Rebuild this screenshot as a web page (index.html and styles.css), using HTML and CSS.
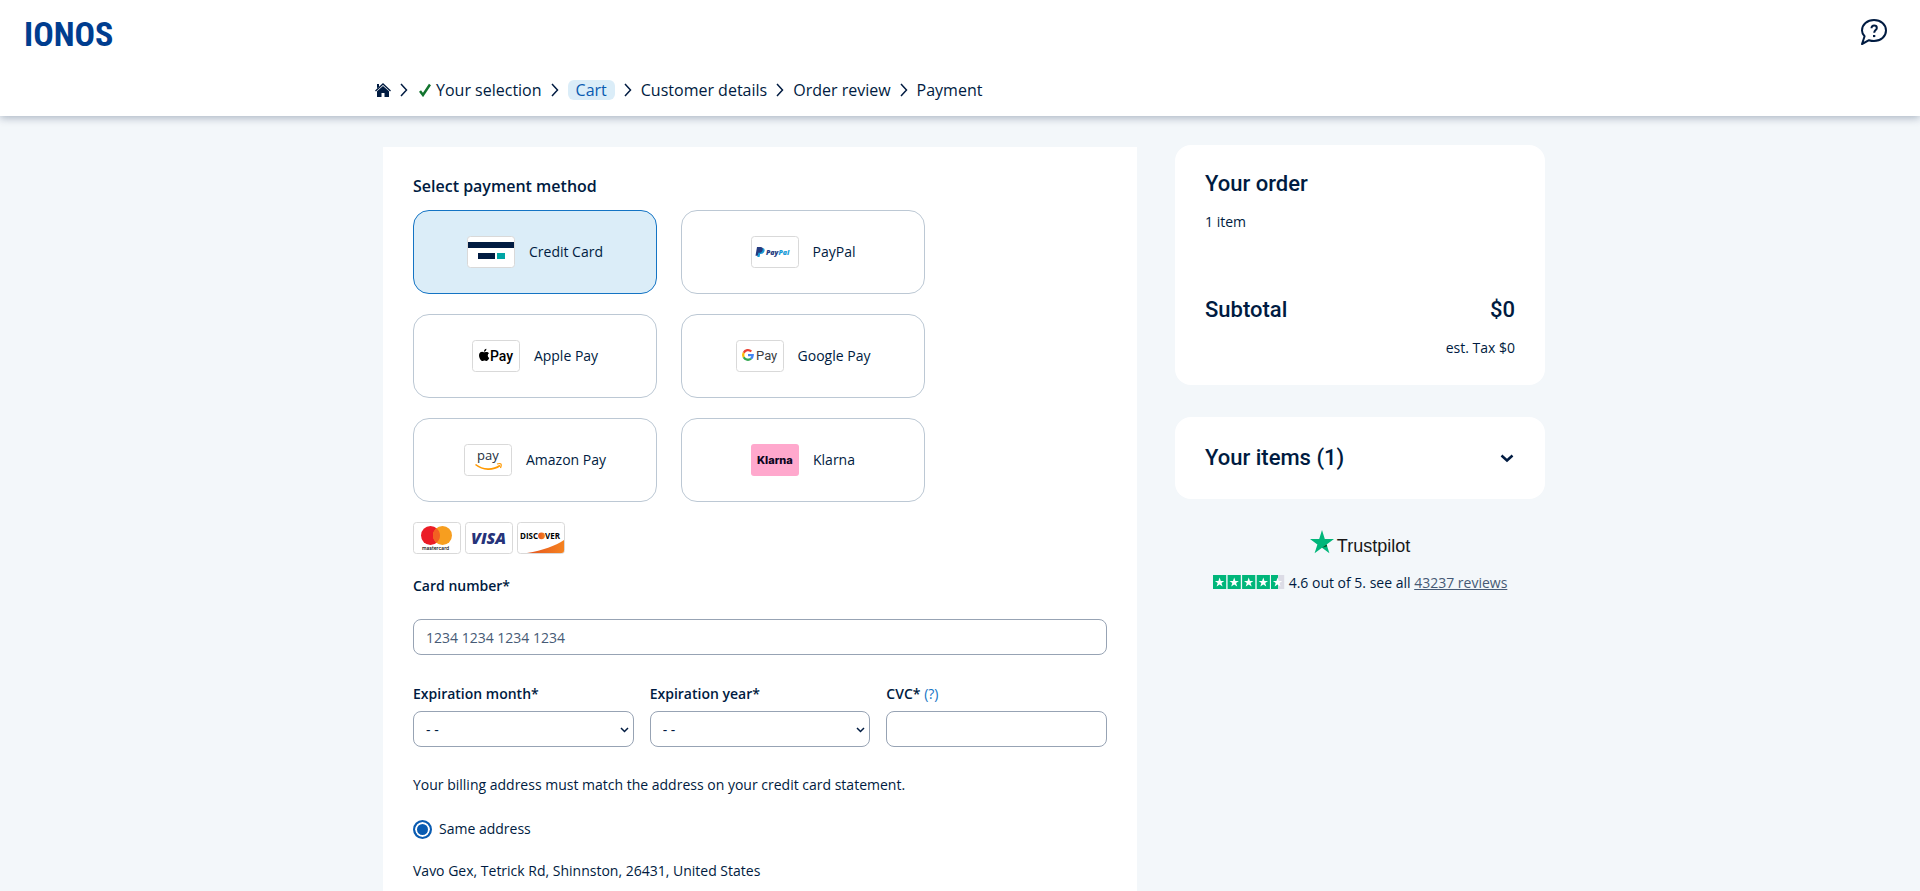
FILE: index.html
```html
<!DOCTYPE html>
<html lang="en">
<head>
  <meta charset="UTF-8">
  <meta name="viewport" content="width=device-width, initial-scale=1.0">
  <title>IONOS Payment</title>
  <link rel="stylesheet" href="styles.css">
</head>

<body>
  <header class="header">
    <div class="topbar">
      <a class="logo" href="#">IONOS</a>
      <button class="help" type="button" aria-label="Help">
        <svg width="28" height="28" viewBox="0 0 28 28" fill="none" stroke="#001b41" stroke-width="2">
          <path d="M4.6 18.3 C2.8 16.5 2 14.6 2 12.5 C2 6.600 7.200 2 14 2 S26 6.600 26 12.500 S20.800 23 14 23 C12.200 23 10.600 22.700 9 22.200 L2 26 Z" stroke-linejoin="round"/>
          <path d="M11.500 10.300 C11.500 8.500 12.500 7.600 14.100 7.600 C15.700 7.600 16.800 8.500 16.800 9.900 C16.800 12 14.200 12.200 14.200 14.800"/>
          <path d="M13 17h2.300v2.100h-2.300z" fill="#001b41" stroke="none"/>
        </svg>
      </button>
    </div>
    <nav class="steps container">
      <a href="#" class="home" aria-label="Home">
        <svg width="16" height="14" viewBox="0 0 16 14">
          <path d="M2 1h2v2.500L2 5.400z" fill="#001b41"/>
          <path d="M.5 8 L8 1 L15.500 8" fill="none" stroke="#001b41" stroke-width="1.300"/>
          <path d="M2 8.300 L8 2.900 L14 8.300V14H9.500V10H6.500V14H2z" fill="#001b41"/>
        </svg>
      </a>
      <svg class="sep" viewBox="0 0 8 14"><path d="M1 1l5.500 6L1 13"/></svg>
      <a href="#" class="done">
        <svg width="12" height="14" viewBox="0 0 12 14"><path d="M1 8l3 4L11 1.500" fill="none" stroke="#12742e" stroke-width="2.500"/></svg>
        Your selection
      </a>
      <svg class="sep" viewBox="0 0 8 14"><path d="M1 1l5.500 6L1 13"/></svg>
      <a href="#" class="active">Cart</a>
      <svg class="sep" viewBox="0 0 8 14"><path d="M1 1l5.500 6L1 13"/></svg>
      <span>Customer details</span>
      <svg class="sep" viewBox="0 0 8 14"><path d="M1 1l5.500 6L1 13"/></svg>
      <span>Order review</span>
      <svg class="sep" viewBox="0 0 8 14"><path d="M1 1l5.500 6L1 13"/></svg>
      <span>Payment</span>
    </nav>
  </header>

  <div class="content container">
    <main class="payment">
      <form>
        <h2>Select payment method</h2>
        <div class="methods">
          <label class="method">
            <input type="radio" name="method" checked>
            <svg class="badge" viewBox="0 0 48 32">
              <rect class="frame" x=".5" y=".5" width="47" height="31" rx="3"/>
              <path d="M1 6h46v6H1zM11 17h17v6H11z" fill="#001b41"/>
              <path d="M30 17h8v6h-8z" fill="#00a5a5"/>
            </svg>
            <span>Credit Card</span>
          </label>
          <label class="method">
            <input type="radio" name="method">
            <svg class="badge" viewBox="0 0 48 32">
              <rect class="frame" x=".5" y=".5" width="47" height="31" rx="3"/>
              <path d="M7.500 12.500h3.500c2 0 2.600 1.300 2.200 3-.5 2-1.800 2.800-3.600 2.800h-.8l-.5 3H6z" transform="translate(.3 -.4)" fill="#179bd7"/>
              <path d="M6 11h3.500c2 0 2.600 1.300 2.200 3-.5 2-1.800 2.800-3.600 2.800h-.8l-.5 3H4.500z" fill="#253b80"/>
              <text x="15" y="19" class="paypal">Pay<tspan fill="#179bd7">Pal</tspan></text>
            </svg>
            <span>PayPal</span>
          </label>
          <label class="method">
            <input type="radio" name="method">
            <svg class="badge" viewBox="0 0 48 32">
              <rect class="frame" x=".5" y=".5" width="47" height="31" rx="3"/>
              <path d="M12 12.200c-1.400-.6-2.500-.7-3.600.1-2.100 1.500-1.500 5.200.1 7.400 1 1.400 1.700 1.600 3 1 .7-.3 1.300-.3 2 0 1.300.6 2 .2 2.900-1.100.4-.6.7-1.200.8-1.700-1.800-.9-2-3.500-.2-4.600-1-1.500-2.600-1.700-4-1.100z"/>
              <path d="M11.900 11.700c-.1-1.400 1-2.800 2.500-3 .2 1.500-1 2.900-2.500 3z"/>
              <text x="18" y="21" class="applepay">Pay</text>
            </svg>
            <span>Apple Pay</span>
          </label>
          <label class="method">
            <input type="radio" name="method">
            <svg class="badge" viewBox="0 0 48 32">
              <rect class="frame" x=".5" y=".5" width="47" height="31" rx="3"/>
              <g fill="none" stroke-width="2.300">
                <path d="M7.700 12.800a4.800 4.800 0 0 1 7.600-1.300" stroke="#ea4335"/>
                <path d="M7.700 12.800a4.800 4.800 0 0 0 0 4.400" stroke="#fbbc04"/>
                <path d="M7.700 17.200a4.800 4.800 0 0 0 7.300 1.400" stroke="#34a853"/>
                <path d="M15 18.600a4.800 4.800 0 0 0 1.700-3.400H12" stroke="#4285f4"/>
              </g>
              <text x="20" y="20" class="gpay">Pay</text>
            </svg>
            <span>Google Pay</span>
          </label>
          <label class="method">
            <input type="radio" name="method">
            <svg class="badge" viewBox="0 0 48 32">
              <rect class="frame" x=".5" y=".5" width="47" height="31" rx="3"/>
              <text x="13" y="16" class="amazonpay">pay</text>
              <path d="M11.500 20.500C19 26.500 29 26.500 36 21.500" fill="none" stroke="#f90" stroke-width="1.600"/>
              <path d="M33 20c4-1.200 5.200-.5 3.500 4" fill="none" stroke="#f90" stroke-width="1.200"/>
            </svg>
            <span>Amazon Pay</span>
          </label>
          <label class="method">
            <input type="radio" name="method">
            <svg class="badge" viewBox="0 0 48 32">
              <rect width="48" height="32" rx="3" fill="#ffa8cd"/>
              <text x="6" y="20" class="klarna">Klarna</text>
            </svg>
            <span>Klarna</span>
          </label>
        </div>

        <div class="cards">
          <svg class="badge" viewBox="0 0 48 32" role="img" aria-label="Mastercard">
            <rect class="frame" x=".5" y=".5" width="47" height="31" rx="3"/>
            <circle cx="17.500" cy="13.500" r="9.500" fill="#eb1c26"/>
            <circle cx="29.500" cy="13.500" r="9.500" fill="#f79e1f"/>
            <path d="M23.500 6.130a9.500 9.500 0 0 1 0 14.740a9.500 9.500 0 0 1 0-14.740z" fill="#f26122"/>
            <text x="9" y="28" class="mastercard">mastercard</text>
          </svg>
          <svg class="badge" viewBox="0 0 48 32" role="img" aria-label="Visa">
            <rect class="frame" x=".5" y=".5" width="47" height="31" rx="3"/>
            <text x="6" y="22" class="visa">VISA</text>
          </svg>
          <svg class="badge" viewBox="0 0 48 32" role="img" aria-label="Discover">
            <defs>
              <linearGradient id="orange">
                <stop offset="0" stop-color="#e4541f"/>
                <stop offset="1" stop-color="#f58220"/>
              </linearGradient>
            </defs>
            <rect class="frame" x=".5" y=".5" width="47" height="31" rx="3"/>
            <path d="M10 31C26 28.500 38 24 47 18V28.500q0 2.500-2.500 2.500z" fill="url(#orange)"/>
            <text x="3" y="17" class="discover">DISC</text>
            <circle cx="24.500" cy="13.800" r="3.400" fill="url(#orange)"/>
            <text x="28" y="17" class="discover">VER</text>
          </svg>
        </div>

        <div class="field card-number">
          <label for="number">Card number*</label>
          <input id="number" type="text" placeholder="1234 1234 1234 1234">
        </div>

        <div class="row">
          <div class="field">
            <label for="month">Expiration month*</label>
            <div class="select">
              <select id="month"><option>- -</option></select>
              <svg width="9" height="6" viewBox="0 0 9 6"><path d="M1 1l3.500 3.500L8 1"/></svg>
            </div>
          </div>
          <div class="field">
            <label for="year">Expiration year*</label>
            <div class="select">
              <select id="year"><option>- -</option></select>
              <svg width="9" height="6" viewBox="0 0 9 6"><path d="M1 1l3.500 3.500L8 1"/></svg>
            </div>
          </div>
          <div class="field">
            <div><label for="cvc">CVC*</label> <a href="#cvc">(?)</a></div>
            <input id="cvc" type="text">
          </div>
        </div>

        <p class="note">Your billing address must match the address on your credit card statement.</p>
        <label class="same"><input type="radio" name="address" checked> Same address</label>
        <p class="address">Vavo Gex, Tetrick Rd, Shinnston, 26431, United States</p>
      </form>
    </main>

    <aside class="sidebar">
      <section class="box order">
        <h3>Your order</h3>
        <p>1 item</p>
        <div class="subtotal">
          <h3>Subtotal</h3>
          <h3>$0</h3>
        </div>
        <p class="tax">est. Tax $0</p>
      </section>
      <button class="box items" type="button">
        <span>Your items (1)</span>
        <svg width="14" height="9" viewBox="0 0 14 9"><path d="M1.500 1.500L7 6.500l5.500-5" fill="none" stroke="#001b41" stroke-width="2.500"/></svg>
      </button>
      <div class="trustpilot">
        <div class="brand">
          <svg width="24" height="24" viewBox="0 0 24 24">
            <path d="M12 0l2.800 8.900H24l-7.400 5.500 2.800 8.900L12 17.800l-7.400 5.500 2.800-8.900L0 8.900h9.200z" fill="#00b67a"/>
            <path d="M17.200 16.200l-.6-1.800L12 17.800z" fill="#005128"/>
          </svg>
          <span>Trustpilot</span>
        </div>
        <div class="rating">
          <svg width="72" height="14" viewBox="0 0 72 14">
            <defs><path id="star" d="M6.600 2.500l1.200 3.400h3.500L8.500 8l1.100 3.500-3-2.100-3 2.100L4.700 8 1.900 5.900h3.500z" fill="#fff"/></defs>
            <path d="M0 0h13.200v14H0zM14.600 0h13.200v14H14.600zM29.100 0h13.200v14H29.100zM43.700 0h13.200v14H43.700z" fill="#00b67a"/>
            <path d="M58 0h7v14h-7z" fill="#00b67a"/>
            <path d="M65 0h6.200v14H65z" fill="#dcdce6"/>
            <use href="#star"/>
            <use href="#star" x="14.600"/>
            <use href="#star" x="29.100"/>
            <use href="#star" x="43.700"/>
            <use href="#star" x="58"/>
          </svg>
          <span>4.6 out of 5. see all <a href="#">43237 reviews</a></span>
        </div>
      </div>
    </aside>
  </div>
</body>
</html>
```
FILE: styles.css
```css
*{
  box-sizing: border-box;
}

body{
  display: flex;
  flex-direction: column;
  min-height: 100vh;
  margin: 0;
  background: #f3f7fa;
  color: #001b41;
  font: 14px/20px "Open Sans", sans-serif;
}

h2,h3,p{
  margin: 0;
}

a{
  color: inherit;
  text-decoration: none;
}

button{
  border: none;
  background: none;
  padding: 0;
  color: inherit;
  cursor: pointer;
}

svg{
  display: block;
  flex: none;
}

.container{
  width: 100%;
  max-width: 1170px;
  margin: 0 auto;
}

/* header */
.header{
  position: relative;
  background: #fff;
  box-shadow: 0 2px 8px rgba(0,27,65,0.3);
}

.topbar{
  display: flex;
  justify-content: space-between;
  align-items: flex-start;
  height: 68px;
  padding: 18px 32px 0 24px;
}

.logo{
  color: #003d8f;
  font: bold 34px/32px "Liberation Sans Narrow", "Roboto Condensed", Roboto, sans-serif;
}

.steps{
  display: flex;
  align-items: center;
  gap: 9px;
  height: 48px;
  padding-bottom: 4px;
  font-size: 16px;
}

.steps .sep{
  width: 8px;
  height: 14px;
  fill: none;
  stroke: #001b41;
  stroke-width: 1.5;
}

.steps .done{
  display: flex;
  align-items: center;
  gap: 5px;
  margin-left: 2px;
}

.steps .active{
  padding: 0 8px;
  border-radius: 6px;
  background: #dbedf8;
  color: #095bb1;
}

/* layout */
.content{
  display: flex;
  flex: 1;
  gap: 38px;
  padding-left: 8px;
}

.payment{
  flex: 1;
  margin-top: 31px;
  padding: 28px 30px 0;
  background: #fff;
}

.payment h2{
  margin-bottom: 13px;
  font-size: 16px;
  line-height: 22px;
  font-weight: 600;
}

/* payment methods */
.methods{
  display: grid;
  grid-template-columns: 244px 244px;
  gap: 20px 24px;
}

.method{
  display: flex;
  align-items: center;
  justify-content: center;
  gap: 14px;
  height: 84px;
  border: 1px solid #bcc8d4;
  border-radius: 16px;
  cursor: pointer;
}

.method input{
  position: absolute;
  opacity: 0;
}

.method:has(input:checked){
  border-color: #1474c4;
  background: #dbedf8;
}

.badge{
  width: 48px;
  height: 32px;
}

.badge .frame{
  fill: #fff;
  stroke: #d9d9d9;
}

.badge .paypal{
  font: italic 800 7px "Open Sans", sans-serif;
  fill: #253b80;
}

.badge .applepay{
  font: 500 14px Roboto, sans-serif;
}

.badge .gpay{
  font: 13px Roboto, sans-serif;
  fill: #3c4043;
}

.badge .amazonpay{
  font: 13px "Open Sans", sans-serif;
  fill: #232f3e;
}

.badge .klarna{
  font: 800 11px Inter, sans-serif;
  fill: #0b051d;
}

.badge .mastercard{
  font: 500 5px Inter, sans-serif;
}

.badge .visa{
  font: italic 800 16px "Open Sans", sans-serif;
  fill: #26337a;
}

.badge .discover{
  font: bold 8px "Open Sans", sans-serif;
}

.cards{
  display: flex;
  gap: 4px;
  margin: 20px 0 22px;
}

/* form fields */
.field{
  display: flex;
  flex-direction: column;
  flex: 1;
  gap: 7px;
}

.field label{
  font-weight: 600;
}

.field a{
  color: #1474c4;
}

.field input,
.field select{
  width: 100%;
  height: 36px;
  padding: 0 12px;
  border: 1px solid #97a3b4;
  border-radius: 8px;
  background: #fff;
  color: #001b41;
  font: 14px "Open Sans", sans-serif;
  appearance: none;
}

.field input::placeholder{
  color: #465a75;
}

.card-number{
  gap: 23px;
}

.row{
  display: flex;
  gap: 16px;
  margin-top: 29px;
}

.select{
  position: relative;
}

.select svg{
  position: absolute;
  right: 5px;
  top: 16px;
  fill: none;
  stroke: #001b41;
  stroke-width: 1.5;
  pointer-events: none;
}

.note{
  margin-top: 28px;
}

.same{
  display: flex;
  align-items: center;
  gap: 7px;
  margin: 24px 0 22px;
}

.same input{
  width: 19px;
  height: 19px;
  margin: 0;
  border: 2px solid #095bb1;
  border-radius: 50%;
  background: #095bb1;
  box-shadow: inset 0 0 0 2px #fff;
  appearance: none;
}

/* sidebar */
.sidebar{
  width: 370px;
  margin-top: 29px;
}

.box{
  display: block;
  width: 100%;
  border-radius: 16px;
  background: #fff;
}

.box h3,
.items{
  font: 500 22px/30px Roboto, sans-serif;
}

.order{
  padding: 24px 30px 27px;
}

.order p{
  margin-top: 13px;
}

.order .subtotal{
  display: flex;
  justify-content: space-between;
  margin-top: 63px;
}

.order .tax{
  text-align: right;
}

.items{
  display: flex;
  align-items: center;
  justify-content: space-between;
  height: 82px;
  margin-top: 32px;
  padding: 0 31px 0 30px;
}

.trustpilot{
  margin-top: 31px;
}

.brand,
.rating{
  display: flex;
  justify-content: center;
}

.brand{
  gap: 3px;
  color: #191919;
  font: 18px/32px "Liberation Sans", sans-serif;
}

.rating{
  gap: 4px;
  margin-top: 11px;
}

.rating svg{
  margin-top: 2px;
}

.rating a{
  color: #465a75;
  text-decoration: underline;
}
```
